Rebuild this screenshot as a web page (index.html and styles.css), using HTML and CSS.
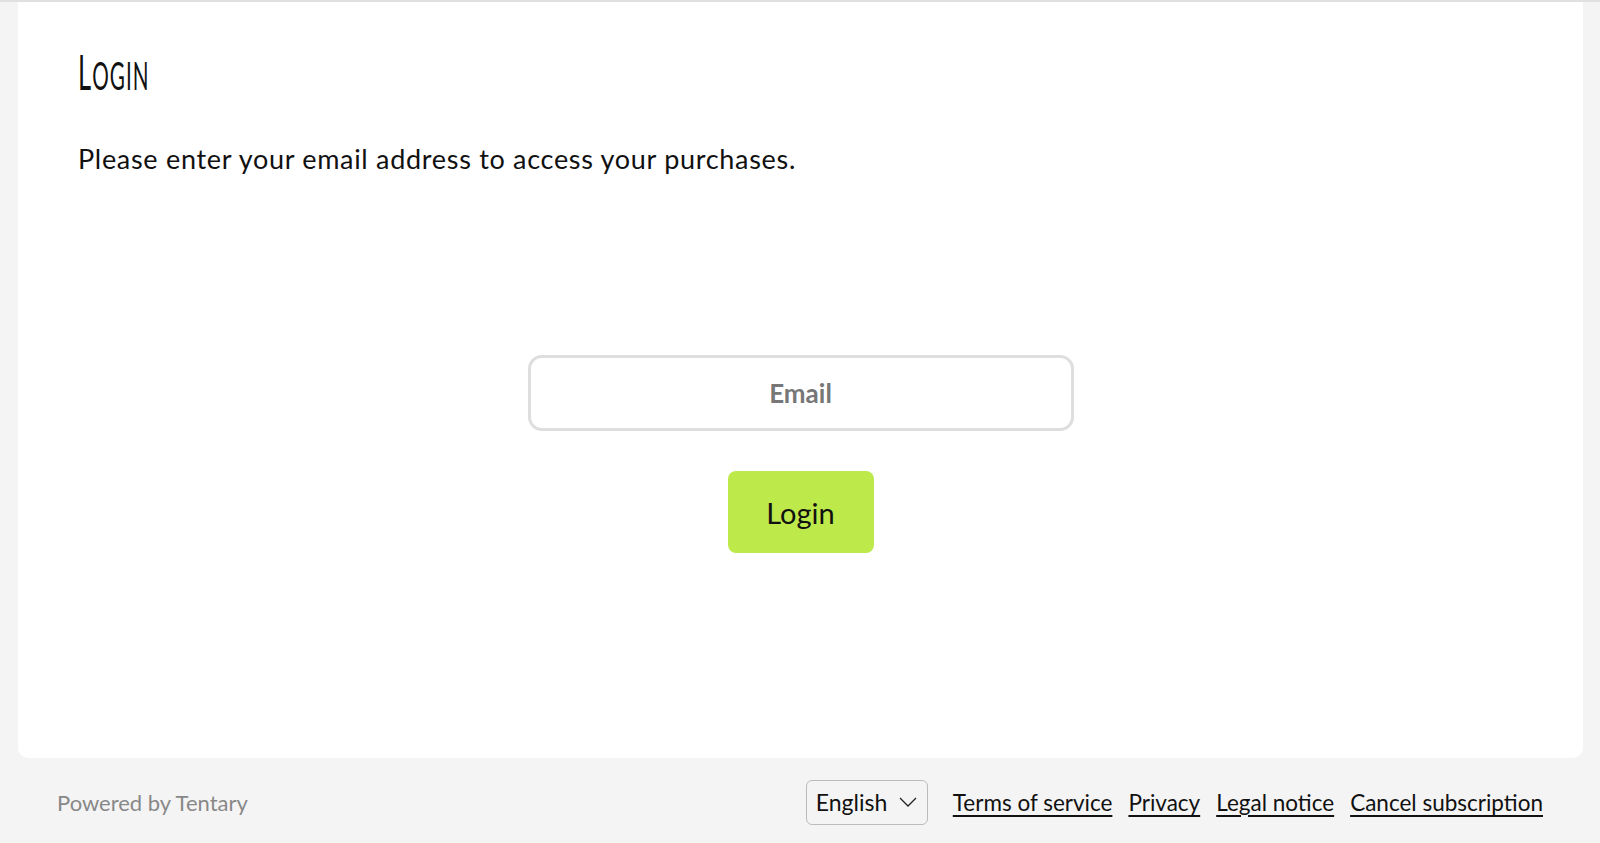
FILE: index.html
```html
<!DOCTYPE html>
<html lang="en">
<head>
  <meta charset="UTF-8" />
  <meta name="viewport" content="width=device-width, initial-scale=1.0"/>
  <title>Login</title>
  <link rel="stylesheet" href="styles.css">
</head>
<body>
  <div class="card">
    <h1 class="title">Login</h1>
    <p class="intro">Please enter your email address to access your purchases.</p>

    <form class="login-form">
      <input type="email" class="email" placeholder="Email">
      <button type="button" class="login-btn">Login</button>
    </form>
  </div>

  <footer class="footer">
    <span class="powered">Powered by Tentary</span>
    <div class="footer-right">
      <div class="lang">
        English
        <svg width="18" height="10" viewBox="0 0 18 10"><path d="M1 1 L9 9 L17 1" fill="none" stroke="#222" stroke-width="1.3"/></svg>
      </div>
      <nav class="links">
        <a href="#">Terms of service</a>
        <a href="#">Privacy</a>
        <a href="#">Legal notice</a>
        <a href="#">Cancel subscription</a>
      </nav>
    </div>
  </footer>
</body>
</html>
```

FILE: styles.css
```css
body {
  font-family: 'Lato', 'Open Sans', sans-serif;
  background: #f4f4f4;
  color: #111;
  margin: 0;
  border-top: 2px solid #e0e0e0;
}

.card {
  background: #fff;
  margin: 0 17px 0 18px;
  height: 756px;
  box-sizing: border-box;
  padding: 46px 60px 0;
  border-radius: 0 0 10px 10px;
}

.title {
  margin: 0;
  font-family: 'Lato', sans-serif;
  font-weight: 400;
  font-size: 39px;
  line-height: 48px;
  text-transform: uppercase;
  transform: scaleX(0.53);
  transform-origin: left center;
  letter-spacing: 2px;
  color: #111;
}

.title::first-letter {
  font-size: 48px;
}

.intro {
  margin: 44px 0 0;
  font-size: 27px;
  line-height: 32px;
  letter-spacing: 0.7px;
  color: #111;
}

.login-form {
  display: flex;
  flex-direction: column;
  align-items: center;
  margin-top: 180px;
}

.email {
  width: 546px;
  height: 76px;
  box-sizing: border-box;
  border: 3px solid #dedede;
  border-radius: 14px;
  background: #fff;
  text-align: center;
  font-family: 'Lato', sans-serif;
  font-size: 26px;
  font-weight: 700;
  outline: none;
}

.email::placeholder {
  color: #777;
}

.login-btn {
  margin-top: 40px;
  width: 146px;
  height: 82px;
  border: none;
  border-radius: 8px;
  background: #bde94b;
  color: #111;
  font-family: 'Lato', sans-serif;
  font-size: 29px;
  cursor: pointer;
}

.footer {
  height: 85px;
  box-sizing: border-box;
  padding: 3px 57px 0;
  display: flex;
  align-items: center;
  justify-content: space-between;
}

.powered {
  color: #888;
  font-size: 22px;
}

.footer-right {
  display: flex;
  align-items: center;
  gap: 25px;
}

.lang {
  width: 122px;
  height: 45px;
  box-sizing: border-box;
  border: 1.5px solid #bbb;
  border-radius: 6px;
  display: flex;
  align-items: center;
  justify-content: space-between;
  padding: 0 10px 0 9px;
  font-size: 23px;
}

.links {
  display: flex;
  gap: 16px;
}

.links a {
  color: #111;
  font-size: 22.5px;
  text-decoration: underline;
  text-underline-offset: 4px;
}
```
